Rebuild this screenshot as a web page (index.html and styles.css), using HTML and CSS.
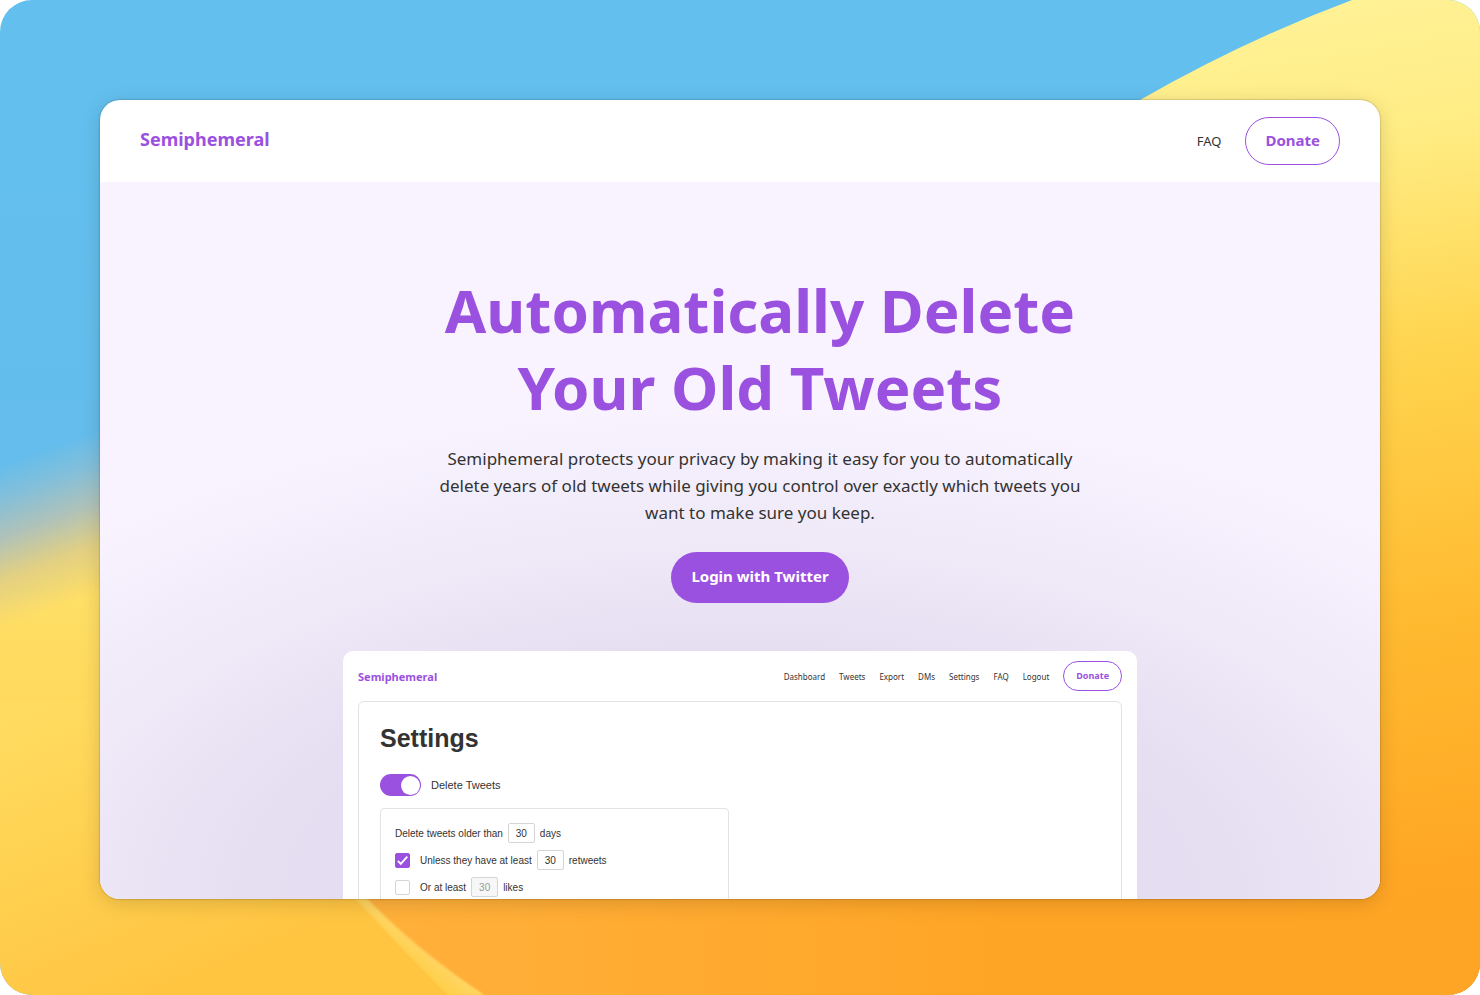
FILE: index.html
```html
<!DOCTYPE html>
<html lang="en">
<head>
<meta charset="utf-8">
<title>Semiphemeral</title>
<link rel="stylesheet" href="styles.css">
</head>
<body>
<div class="stage">
  <svg class="wallpaper" viewBox="0 0 1480 995" preserveAspectRatio="none" aria-hidden="true">
    <defs>
      <linearGradient id="sky" x1="0" y1="0" x2="0" y2="1">
        <stop offset="0" stop-color="#63c0ee"/><stop offset="0.5" stop-color="#64bdec"/>
      </linearGradient>
      <linearGradient id="sand" gradientUnits="userSpaceOnUse" x1="0" y1="560" x2="180" y2="995">
        <stop offset="0" stop-color="#ffdf66"/><stop offset="0.4" stop-color="#ffd95c"/><stop offset="1" stop-color="#ffc440"/>
      </linearGradient>
      <linearGradient id="haze" gradientUnits="userSpaceOnUse" x1="0" y1="465" x2="53" y2="610">
        <stop offset="0" stop-color="#64bdec"/><stop offset="0.2" stop-color="#82bfdb"/><stop offset="0.45" stop-color="#b0c2b8"/><stop offset="0.7" stop-color="#e2d083"/><stop offset="1" stop-color="#ffdf66"/>
      </linearGradient>
      <linearGradient id="hazeFade" gradientUnits="userSpaceOnUse" x1="0" y1="600" x2="0" y2="700">
        <stop offset="0" stop-color="#ffd95c" stop-opacity="0"/><stop offset="1" stop-color="#ffd95c"/>
      </linearGradient>
      <linearGradient id="sun" gradientUnits="userSpaceOnUse" x1="1330" y1="0" x2="1480" y2="900">
        <stop offset="0" stop-color="#fff296"/><stop offset="0.15" stop-color="#ffed85"/><stop offset="0.4" stop-color="#ffd44e"/><stop offset="0.7" stop-color="#ffb92f"/><stop offset="1" stop-color="#ffa522"/>
      </linearGradient>
      <linearGradient id="amber" gradientUnits="userSpaceOnUse" x1="400" y1="0" x2="1000" y2="0">
        <stop offset="0" stop-color="#ffb03a"/><stop offset="1" stop-color="#ffa526"/>
      </linearGradient>
      <linearGradient id="amberFade" gradientUnits="userSpaceOnUse" x1="0" y1="800" x2="0" y2="960">
        <stop offset="0" stop-color="#ffa526" stop-opacity="0"/><stop offset="1" stop-color="#ffa526"/>
      </linearGradient>
      <linearGradient id="ridge" gradientUnits="userSpaceOnUse" x1="400" y1="955" x2="425" y2="925">
        <stop offset="0" stop-color="#ffd04a"/><stop offset="1" stop-color="#ffd878"/>
      </linearGradient>
      <filter id="edge"><feGaussianBlur stdDeviation="1"/></filter>
    </defs>
    <rect width="1480" height="995" fill="url(#sky)"/>
    <path d="M0 400H300V720H0Z" fill="url(#haze)"/>
    <path d="M0 600H300V700H0Z" fill="url(#hazeFade)"/>
    <path d="M0 700H600V995H0Z" fill="url(#sand)"/>
    <path d="M1140 100Q1245 40 1352 0H1480V995H900V240Z" fill="url(#sun)"/>
    <path d="M355 896Q410 949 484 995H1300V896Z" fill="url(#amber)"/>
    <path d="M350 893H362Q410 945 484 995H448Q395 942 350 893Z" fill="url(#ridge)" filter="url(#edge)"/>
    <path d="M1000 800H1480V995H1000Z" fill="url(#amberFade)"/>
  </svg>

  <div class="window">
    <header class="site-header">
      <a class="brand" href="#">Semiphemeral</a>
      <nav class="site-nav">
        <a class="site-link" href="#">FAQ</a>
        <a class="donate" href="#">Donate</a>
      </nav>
    </header>
    <main class="hero">
      <div class="intro">
        <h1 class="headline">Automatically Delete<br>Your Old Tweets</h1>
        <p class="lead">Semiphemeral protects your privacy by making it easy for you to automatically<br>delete years of old tweets while giving you control over exactly which tweets you<br>want to make sure you keep.</p>
        <button class="login" type="button">Login with Twitter</button>
      </div>

      <section class="preview">
        <div class="preview-header">
          <a class="preview-brand" href="#">Semiphemeral</a>
          <nav class="preview-nav">
            <a href="#">Dashboard</a>
            <a href="#">Tweets</a>
            <a href="#">Export</a>
            <a href="#">DMs</a>
            <a href="#">Settings</a>
            <a href="#">FAQ</a>
            <a href="#">Logout</a>
            <a class="preview-donate" href="#">Donate</a>
          </nav>
        </div>
        <div class="panel">
          <h2 class="panel-title">Settings</h2>
          <label class="switch-row"><input class="switch" type="checkbox" role="switch" checked>Delete Tweets</label>
          <div class="options">
            <div class="option">
              <label for="days">Delete tweets older than</label>
              <input class="number" id="days" type="text" value="30">
              <span>days</span>
            </div>
            <div class="option">
              <input class="tick" id="use-retweets" type="checkbox" checked>
              <label for="use-retweets">Unless they have at least</label>
              <input class="number" type="text" value="30" aria-label="Retweets">
              <span>retweets</span>
            </div>
            <div class="option">
              <input class="tick" id="use-likes" type="checkbox">
              <label for="use-likes">Or at least</label>
              <input class="number" type="text" value="30" aria-label="Likes" disabled>
              <span>likes</span>
            </div>
          </div>
        </div>
      </section>
    </main>
  </div>
</div>
</body>
</html>
```
FILE: styles.css
```css
* { box-sizing: border-box; }
html { background: #fff; }
body {
  margin: 0;
  color: #333;
  font-family: "Noto Sans", sans-serif;
}
a { color: inherit; text-decoration: none; }

.stage {
  position: relative;
  display: flex;
  height: 100vh;
  padding: 100px 100px 96px;
  border-radius: 32px;
  overflow: hidden;
}
.wallpaper {
  position: absolute;
  inset: 0;
  width: 100%;
  height: 100%;
}
.window {
  position: relative;
  display: flex;
  flex: 1;
  flex-direction: column;
  border-radius: 20px;
  background: #fff;
  box-shadow: 0 0 1px 1px rgba(0, 0, 0, 0.12), 0 4px 20px rgba(0, 0, 0, 0.15);
  overflow: hidden;
}

.site-header {
  display: flex;
  flex: none;
  align-items: center;
  justify-content: space-between;
  height: 82px;
  padding: 0 40px;
}
.brand { padding-bottom: 4px; color: #9b51e0; font-size: 18px; font-weight: 700; }
.site-nav { display: flex; align-items: center; gap: 24px; font-size: 13px; }
.donate {
  padding: 10px 19px 12px;
  border: 1px solid #9b51e0;
  border-radius: 24px;
  color: #9b51e0;
  font-size: 15px;
  font-weight: 700;
  line-height: 24px;
}

.hero {
  display: flex;
  flex: 1;
  flex-direction: column;
  align-items: center;
  min-height: 0;
  background: radial-gradient(ellipse 960px 490px at 50% 100%, #dfd8ee 0%, #e6dff2 52%, #efe9f8 74%, #f8f3ff 100%);
  overflow: hidden;
}
.intro {
  flex: none;
  width: 100%;
  padding: 90px 0 48px 40px;
  text-align: center;
}
.headline {
  margin: 0;
  color: #9b51e0;
  font-size: 60px;
  line-height: 77px;
}
.lead {
  margin: 19px 0 26px;
  font-size: 17px;
  line-height: 27px;
}
.login {
  display: block;
  margin: 0 auto;
  padding: 12px 20px 14px;
  border: 0;
  border-radius: 26px;
  background: #9b51e0;
  color: #fff;
  font: 700 15px/25px "Noto Sans", sans-serif;
}

.preview {
  flex: none;
  width: 80%;
  max-width: 794px;
  padding: 0 15px;
  border-radius: 10px;
  background: #fff;
}
.preview-header {
  display: flex;
  align-items: center;
  justify-content: space-between;
  height: 50px;
}
.preview-brand { color: #9b51e0; font-size: 11px; font-weight: 700; }
.preview-nav { display: flex; align-items: center; gap: 14px; font-size: 8px; }
.preview-donate {
  padding: 7px 12px;
  border: 1px solid #9b51e0;
  border-radius: 15px;
  color: #9b51e0;
  font-size: 9px;
  font-weight: 700;
  line-height: 14px;
}

.panel {
  padding: 20px 21px;
  border: 1px solid #e3e3e3;
  border-radius: 6px;
  font-family: "Liberation Sans", sans-serif;
}
.panel-title { margin: 0 0 20px; font-size: 25px; line-height: 32px; }
.switch-row { display: flex; align-items: center; gap: 10px; font-size: 11px; }
.switch {
  display: flex;
  align-items: center;
  justify-content: flex-end;
  width: 41px;
  height: 22px;
  margin: 0;
  padding: 1px;
  border-radius: 11px;
  background: #9b51e0;
  appearance: none;
}
.switch::after {
  width: 19px;
  height: 19px;
  border-radius: 50%;
  background: #fff;
  content: "";
}
.options {
  display: flex;
  flex-direction: column;
  gap: 7px;
  width: 349px;
  margin-top: 12px;
  padding: 14px;
  border: 1px solid #e3e3e3;
  border-radius: 4px;
}
.option { display: flex; align-items: center; gap: 5px; font-size: 10px; }
.number {
  width: 27px;
  height: 20px;
  padding: 0;
  border: 1px solid #d5d5d5;
  border-radius: 2px;
  background: #fff;
  color: #333;
  font: inherit;
  text-align: center;
}
.number:disabled { background: #f7f7f7; color: #999; }
.tick {
  width: 15px;
  height: 15px;
  margin: 0 5px 0 0;
  border: 1px solid #d5d5d5;
  border-radius: 2px;
  background: #fff;
  appearance: none;
}
.tick:checked {
  border-color: #9b51e0;
  background: #9b51e0 url("data:image/svg+xml,%3Csvg xmlns='http://www.w3.org/2000/svg' viewBox='0 0 13 13'%3E%3Cpath d='M1.8 6.8 4.8 9.9 11.3 2.6' fill='none' stroke='white' stroke-width='1.8'/%3E%3C/svg%3E") center / 13px no-repeat;
}
```
